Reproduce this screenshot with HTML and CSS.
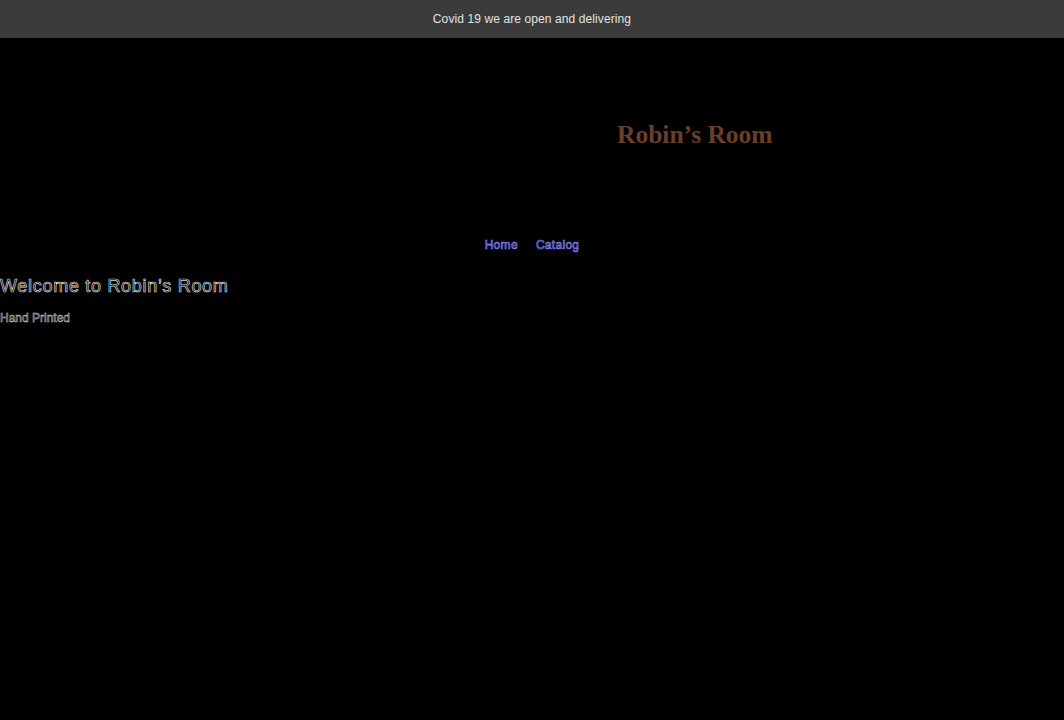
FILE: index.html
```html
<!DOCTYPE html>
<html lang="en">
<head>
<meta charset="utf-8">
<title>Robin's Room</title>
<link rel="stylesheet" href="styles.css">
</head>
<body>
<div class="announce">Covid 19 we are open and delivering</div>
<header class="header">
  <div class="logo">Robin’s Room</div>
</header>
<nav class="nav">
  <a href="#" class="nav-link">Home</a>
  <a href="#" class="nav-link">Catalog</a>
</nav>
<main class="main">
  <h1 class="welcome">Welcome to Robin’s Room</h1>
  <p class="sub">Hand Printed</p>
</main>
</body>
</html>
```
FILE: styles.css
```css
html, body {
  margin: 0;
  padding: 0;
  background: #000;
  font-family: "Liberation Sans", Arial, sans-serif;
}
.announce {
  height: 38px;
  background: #3b3b3b;
  color: #e2e2e2;
  font-size: 12px;
  letter-spacing: 0.1px;
  display: flex;
  align-items: center;
  justify-content: center;
}
.header {
  height: 192px;
  display: flex;
  align-items: center;
  padding-left: 617px;
  box-sizing: border-box;
}
.logo {
  font-family: "Liberation Serif", "DejaVu Serif", serif;
  font-weight: bold;
  font-size: 25.5px;
  color: #6a3e29;
  margin-top: 2px;
}
.nav {
  display: flex;
  justify-content: center;
  gap: 18px;
  height: 30px;
  align-items: center;
}
.nav-link {
  color: #1c1c6a;
  -webkit-text-stroke: 0.6px #8a8aff;
  font-size: 12px;
  text-decoration: none;
  letter-spacing: 0.3px;
}
.main {
  padding-top: 14px;
}
.welcome {
  margin: 0;
  font-size: 18px;
  font-weight: normal;
  color: #000;
  -webkit-text-stroke: 0.7px #d8d8d8;
  letter-spacing: 0.7px;
  line-height: 24px;
}
.sub {
  margin: 12px 0 0;
  font-size: 12px;
  color: #111;
  -webkit-text-stroke: 0.5px #cfcfcf;
  line-height: 16px;
}
```
